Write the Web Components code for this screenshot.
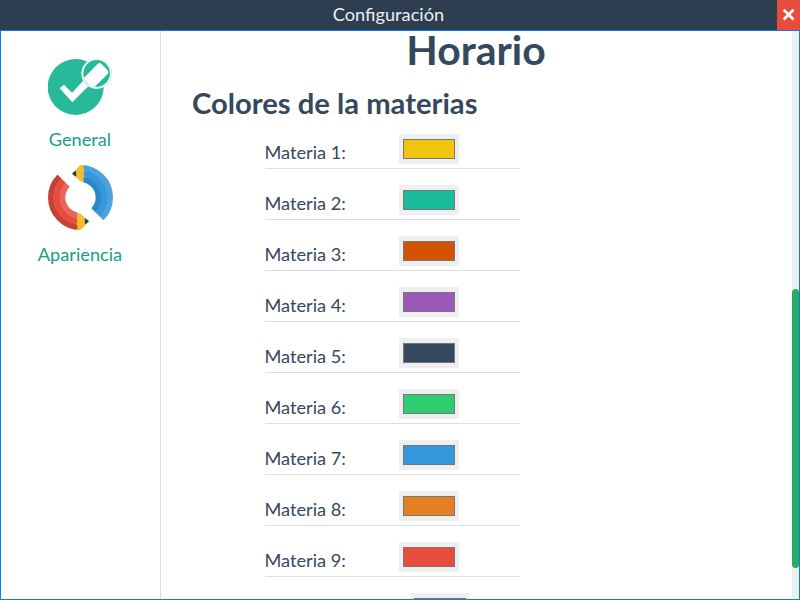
<!DOCTYPE html>
<html lang="es">
<head>
<meta charset="utf-8">
<title>Configuración</title>
<style>
html,body{margin:0;height:100%;overflow:hidden}
body{font-family:Lato,"Liberation Sans",sans-serif;font-size:18.2px;color:#34495e;background:#fff}
</style>
</head>
<body>
<config-window></config-window>
<script>
const define = (name, html, setup) => customElements.define(name, class extends HTMLElement {
  constructor() {
    super();
    this.attachShadow({ mode: 'open' }).innerHTML = html;
  }
  connectedCallback() { if (setup) setup(this, this.shadowRoot); }
});

define('title-bar', `
<style>
:host{display:flex;height:30px;flex:none;background:#2c3e50;color:#ecf0f1}
.t{flex:1;text-align:center;line-height:29px}
.x{width:23px;display:flex;align-items:center;justify-content:center;background:#e74c3c}
svg{display:block}
</style>
<div class="t"><slot></slot></div>
<div class="x"><svg width="23" height="30" viewBox="0 0 23 30"><path d="M7.7 10.7l7.8 7.8M15.5 10.7l-7.8 7.8" stroke="#fff" stroke-width="2.7" stroke-linecap="square"/></svg></div>`);

define('nav-item', `
<style>
:host{display:flex;flex-direction:column;align-items:center;height:115px;color:#16a085}
.i{height:66px;display:flex}
.l{line-height:24px;margin-top:11px;margin-left:-1px}
</style>
<div class="i"><slot name="icon"></slot></div><div class="l"><slot></slot></div>`);

define('check-icon', `
<style>:host{display:block}svg{display:block}</style>
<svg width="66" height="66" viewBox="54 27 198 198">
<circle cx="137" cy="126" r="84" fill="#26b99a"/>
<path d="M89 130L102 119L126 143L168 98L184 115L127 172Z" fill="#fff"/>
<circle cx="200" cy="86" r="46" fill="#d5dbdb"/>
<circle cx="200" cy="85" r="45" fill="#f3f5f5"/>
<circle cx="200" cy="85" r="40" fill="#26b99a"/>
<path d="M162 98L203 57Q208 51 214 56L233 76Q238 81 233 87L194 125Q173 122 162 98Z" fill="#fff"/>
</svg>`);

define('pencils-icon', `
<style>:host{display:block}svg{display:block}</style>
<svg width="65" height="65" viewBox="54 30 195 195">
<defs><clipPath id="c"><path d="M83 59L119 95L151.5 127.5L143 174L145 200L145 226L50 230L50 59Z"/></clipPath></defs>
<g clip-path="url(#c)" fill="none">
<circle cx="151.5" cy="127.5" r="89" stroke="#c64236" stroke-width="17"/>
<circle cx="151.5" cy="127.5" r="71.5" stroke="#e84c3d" stroke-width="20"/>
<circle cx="151.5" cy="127.5" r="54" stroke="#ec6558" stroke-width="17"/>
</g>
<path id="t" d="M142 174Q147 173 152 177L177 199L155 222Q149 227 141 224Q145 215 139 207Q144 199 140 190Q145 182 142 174Z" fill="#f0c030"/>
<path id="p" d="M166 190L177 199L167 208Q162 204 165 199Q162 194 166 190Z" fill="#2c3e50"/>
<g transform="rotate(180 151.5 127.5)">
<g clip-path="url(#c)" fill="none">
<circle cx="151.5" cy="127.5" r="89" stroke="#4aa3df" stroke-width="17"/>
<circle cx="151.5" cy="127.5" r="71.5" stroke="#3498db" stroke-width="20"/>
<circle cx="151.5" cy="127.5" r="54" stroke="#2c85c5" stroke-width="17"/>
</g>
<use href="#t"/><use href="#p"/>
</g>
</svg>`);

define('color-row', `
<style>
:host{display:flex;box-sizing:border-box;width:255px;height:51px;border-bottom:1px solid #dcdfe2;padding-top:16px;flex:none}
.l{line-height:24px;margin-top:6px;margin-left:-.5px;white-space:nowrap}
.b{box-sizing:border-box;width:60px;height:30px;margin-left:53.2px;padding:5px 4px;background:#efefef}
.s{box-sizing:border-box;height:20px;border:1px solid #777}
</style>
<span class="l"><slot></slot></span><div class="b"><div class="s"></div></div>`,
(el, root) => { root.querySelector('.s').style.background = el.getAttribute('color'); });

define('scroll-bar', `
<style>
:host{display:block;width:7px;flex:none;background:#ecf0f1;border-radius:4px;padding-top:258px;box-sizing:border-box}
div{height:279px;background:#27ae60;border-radius:4px}
</style><div></div>`);

define('config-window', `
<style>
:host{display:flex;flex-direction:column;width:800px;height:600px}
.body{flex:1;min-height:0;display:flex;box-sizing:border-box;border:1px solid #0a7af5}
nav{width:159px;flex:none;border-right:1px solid #dcdfe2;padding-top:19px}
check-icon{margin-top:4px}
main{flex:1;overflow:hidden;display:flex;flex-direction:column;padding-left:31px}
h1{margin:0;width:568px;text-align:center;font-size:40.95px;line-height:38px;flex:none}
h2{margin:16px 0 0;font-size:29.2px;line-height:36px;flex:none}
.rows{margin-left:73px;margin-top:-3px;display:flex;flex-direction:column}
</style>
<title-bar>Configuración</title-bar>
<div class="body">
<nav>
<nav-item><check-icon slot="icon"></check-icon>General</nav-item>
<nav-item><pencils-icon slot="icon"></pencils-icon>Apariencia</nav-item>
</nav>
<main>
<h1>Horario</h1>
<h2>Colores de la materias</h2>
<div class="rows">
<color-row color="#f1c40f">Materia 1:</color-row>
<color-row color="#1abc9c">Materia 2:</color-row>
<color-row color="#d35400">Materia 3:</color-row>
<color-row color="#9b59b6">Materia 4:</color-row>
<color-row color="#34495e">Materia 5:</color-row>
<color-row color="#2ecc71">Materia 6:</color-row>
<color-row color="#3498db">Materia 7:</color-row>
<color-row color="#e67e22">Materia 8:</color-row>
<color-row color="#e74c3c">Materia 9:</color-row>
<color-row color="#7f8c8d">Materia 10:</color-row>
</div>
</main>
<scroll-bar></scroll-bar>
</div>`);
</script>
</body>
</html>
